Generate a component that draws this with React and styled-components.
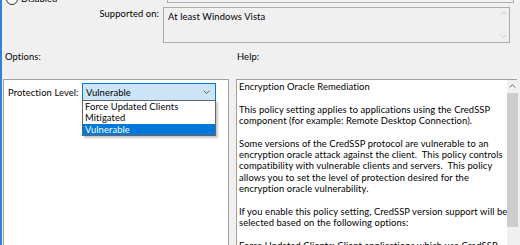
import React from "react";
import styled, { createGlobalStyle } from "styled-components";

const GlobalStyle = createGlobalStyle`
  html, body {
    margin: 0;
    padding: 0;
    background: #f0f0f0;
  }
`;

const Window = styled.div`
  width: 518px;
  height: 245px;
  overflow: hidden;
  border-left: 2px solid #2b84d6;
  background: #f0f0f0;
  font-family: Lato, "Noto Sans", sans-serif;
  font-size: 9.4px;
  letter-spacing: 0.1px;
  color: #000;
  display: flex;
  flex-direction: column;
`;

// top row: the cut-off "Disabled" radio and the bottom of the comment box
const TopStrip = styled.div`
  height: 5px;
  display: flex;
  overflow: hidden;
  flex-shrink: 0;
`;

const RadioCrop = styled.div`
  width: 161px;
  padding-left: 4px;
  display: flex;
  align-items: flex-end;
  gap: 3px;
  height: 5px;
`;

const RadioDot = styled.span`
  width: 10px;
  height: 10px;
  border: 1px solid #333;
  border-radius: 50%;
  background: #fff;
  flex-shrink: 0;
`;

const CutText = styled.span`
  line-height: 10px;
  transform: translateY(-1px);
`;

const CommentBottom = styled.div`
  width: 345px;
  height: 2px;
  border: 1px solid #abadb3;
  border-top: none;
  background: #f0f0f0;
`;

const SupportedRow = styled.div`
  display: flex;
  margin-top: 2px;
  flex-shrink: 0;
`;

const FieldLabel = styled.div`
  width: 161px;
  text-align: right;
  padding-top: 1px;
  padding-right: 4px;
  box-sizing: border-box;
`;

const SupportedBox = styled.div`
  width: 347px;
  height: 36px;
  box-sizing: border-box;
  border: 1px solid #abadb3;
  background: #f0f0f0;
  display: flex;
  justify-content: space-between;
  padding: 3px 0 0 4px;
`;

const MiniScroll = styled.div`
  width: 12px;
  display: flex;
  flex-direction: column;
  justify-content: space-between;
  align-items: center;
  padding: 3px 0 4px;
  margin-top: -3px;
`;

const HeadRow = styled.div`
  display: flex;
  margin-top: 8px;
  height: 27px;
  flex-shrink: 0;
`;

const HeadLabel = styled.div`
  width: ${(p) => p.$w}px;
  padding-left: ${(p) => p.$pl}px;
  box-sizing: border-box;
`;

const Panels = styled.div`
  display: flex;
  gap: 7px;
  padding-left: 1px;
  margin-top: 1px;
`;

const OptionsPanel = styled.div`
  width: 226px;
  height: 200px;
  box-sizing: border-box;
  border: 1px solid #a0a0a0;
  background: #fff;
  padding: 3px 4px;
`;

const OptionRow = styled.div`
  display: flex;
  align-items: center;
`;

const OptionLabel = styled.div`
  width: 74px;
`;

const ComboWrap = styled.div`
  position: relative;
`;

const Combo = styled.div`
  width: 134px;
  height: 18px;
  box-sizing: border-box;
  border: 1px solid #0078d7;
  background: #cce4f7;
  display: flex;
  align-items: center;
  justify-content: space-between;
  padding: 0 5px 0 3px;
`;

const DropList = styled.div`
  position: absolute;
  top: 17px;
  left: 0;
  width: 134px;
  box-sizing: border-box;
  border: 1px solid #646464;
  background: #fff;
  box-shadow: 2px 2px 2px rgba(0, 0, 0, 0.22);
  z-index: 2;
`;

const DropItem = styled.div`
  height: 11.3px;
  line-height: 11.3px;
  padding-left: 2px;
  background: ${(p) => (p.$active ? "#0078d7" : "#fff")};
  color: ${(p) => (p.$active ? "#fff" : "#000")};
`;

const HelpPanel = styled.div`
  width: 281px;
  height: 200px;
  box-sizing: border-box;
  border: 1px solid #a0a0a0;
  background: #fff;
  display: flex;
`;

const HelpText = styled.div`
  flex: 1;
  padding: 1px 0 0 2px;
  line-height: 11.35px;
  white-space: pre;
`;

const HelpLine = styled.div`
  height: 11.35px;
`;

const ScrollBar = styled.div`
  width: 14px;
  background: #f0f0f0;
  display: flex;
  flex-direction: column;
  align-items: center;
`;

const ScrollArrow = styled.div`
  height: 13px;
  display: flex;
  align-items: center;
  justify-content: center;
`;

const Thumb = styled.div`
  width: 11px;
  height: 134px;
  background: #cdcdcd;
`;

const Chevron = ({ up, color = "#606060", size = 7 }) => (
  <svg width={size} height={size * 0.6} viewBox="0 0 10 6">
    <polyline
      points={up ? "1,5 5,1 9,5" : "1,1 5,5 9,1"}
      fill="none"
      stroke={color}
      strokeWidth="1.3"
    />
  </svg>
);

const helpLines = [
  "Encryption Oracle Remediation",
  "",
  "This policy setting applies to applications using the CredSSP",
  "component (for example: Remote Desktop Connection).",
  "",
  "Some versions of the CredSSP protocol are vulnerable to an",
  "encryption oracle attack against the client.  This policy controls",
  "compatibility with vulnerable clients and servers.  This policy",
  "allows you to set the level of protection desired for the",
  "encryption oracle vulnerability.",
  "",
  "If you enable this policy setting, CredSSP version support will be",
  "selected based on the following options:",
  "",
  "Force Updated Clients: Client applications which use CredSSP",
];

const options = ["Force Updated Clients", "Mitigated", "Vulnerable"];

export default function App() {
  return (
    <>
      <GlobalStyle />
      <Window>
        <TopStrip>
          <RadioCrop>
            <RadioDot />
            <CutText>Disabled</CutText>
          </RadioCrop>
          <CommentBottom />
        </TopStrip>

        <SupportedRow>
          <FieldLabel>Supported on:</FieldLabel>
          <SupportedBox>
            <span>At least Windows Vista</span>
            <MiniScroll>
              <Chevron up color="#c4c4c4" />
              <Chevron color="#c4c4c4" />
            </MiniScroll>
          </SupportedBox>
        </SupportedRow>

        <HeadRow>
          <HeadLabel $w={235} $pl={3}>Options:</HeadLabel>
          <HeadLabel $w={200} $pl={0}>Help:</HeadLabel>
        </HeadRow>

        <Panels>
          <OptionsPanel>
            <OptionRow>
              <OptionLabel>Protection Level:</OptionLabel>
              <ComboWrap>
                <Combo>
                  <span>Vulnerable</span>
                  <Chevron color="#555" />
                </Combo>
                <DropList>
                  {options.map((o) => (
                    <DropItem key={o} $active={o === "Vulnerable"}>
                      {o}
                    </DropItem>
                  ))}
                </DropList>
              </ComboWrap>
            </OptionRow>
          </OptionsPanel>

          <HelpPanel>
            <HelpText>
              {helpLines.map((l, i) => (
                <HelpLine key={i}>{l}</HelpLine>
              ))}
            </HelpText>
            <ScrollBar>
              <ScrollArrow>
                <Chevron up color="#606060" />
              </ScrollArrow>
              <Thumb />
            </ScrollBar>
          </HelpPanel>
        </Panels>
      </Window>
    </>
  );
}
